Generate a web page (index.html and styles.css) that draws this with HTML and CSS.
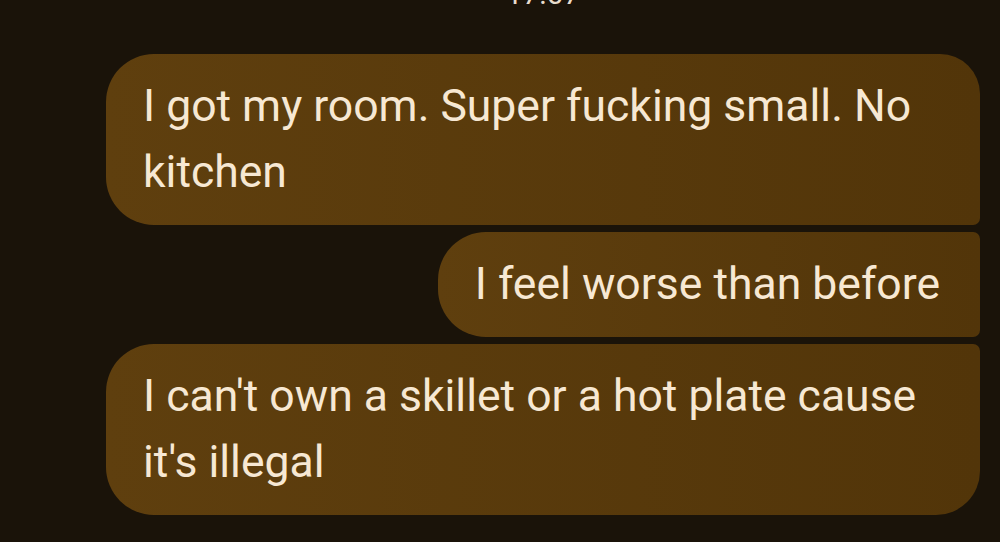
FILE: index.html
```html
<!DOCTYPE html>
<html lang="en">
<head>
<meta charset="UTF-8">
<meta name="viewport" content="width=device-width, initial-scale=1.0">
<title>Messages</title>
<link rel="stylesheet" href="styles.css">
</head>
<body>

<div class="thread">
    <div class="time">17:07</div>

    <div class="bubble first">I got my room. Super fucking small. No kitchen</div>
    <div class="bubble middle">I feel worse than before</div>
    <div class="bubble last">I can't own a skillet or a hot plate cause it's illegal</div>
</div>

</body>
</html>
```

FILE: styles.css
```css
body {
    background-color: #1a1309;
    font-family: Roboto, 'Noto Sans', sans-serif;
    margin: 0;
    padding: 0;
    overflow: hidden;
}

.thread {
    display: flex;
    flex-direction: column;
    align-items: flex-end;
    gap: 7px;
    padding: 0 20px 0 106px;
}

.time {
    align-self: center;
    color: #e8dccb;
    font-size: 30px;
    line-height: 30px;
    margin-top: -21px;
    margin-bottom: 38px;
}

.bubble {
    background: linear-gradient(90deg, #5f3f0e, #523509);
    color: #f7e8d3;
    font-size: 44.5px;
    line-height: 66px;
    padding: 19px 40px 20px 37px;
    max-width: 797px;
    border-radius: 48px 7px 7px 48px;
}

.bubble.first {
    border-radius: 48px 40px 7px 48px;
}

.bubble.last {
    border-radius: 48px 7px 44px 48px;
}
```
